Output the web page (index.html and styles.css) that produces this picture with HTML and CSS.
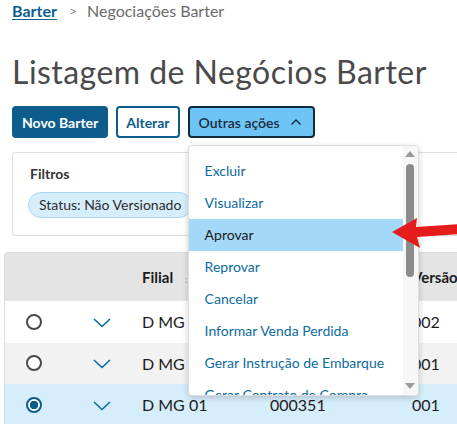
FILE: index.html
```html
<!DOCTYPE html>
<html lang="pt-BR">
<head>
    <meta charset="UTF-8">
    <meta name="viewport" content="width=device-width, initial-scale=1.0">
    <title>Listagem de Negócios Barter</title>
    <link rel="stylesheet" href="styles.css">
</head>
<body>
    <div class="page">
        <nav class="breadcrumb">
            <a class="crumb-link" href="#">Barter</a>
            <span class="crumb-sep">&gt;</span>
            <span class="crumb-current">Negociações Barter</span>
        </nav>

        <h1 class="title">Listagem de Negócios Barter</h1>

        <div class="actions">
            <button class="btn btn-primary">Novo Barter</button>
            <button class="btn btn-outline">Alterar</button>
            <div class="more">
                <button class="btn btn-more">Outras ações
                    <svg class="caret" width="12" height="8" viewBox="0 0 12 8"><path d="M1.5 6.5 L6 2 L10.5 6.5" fill="none" stroke="#1a2a36" stroke-width="1.4"/></svg>
                </button>
                <div class="menu">
                    <ul class="menu-list">
                        <li class="menu-item">Excluir</li>
                        <li class="menu-item">Visualizar</li>
                        <li class="menu-item active">Aprovar</li>
                        <li class="menu-item">Reprovar</li>
                        <li class="menu-item">Cancelar</li>
                        <li class="menu-item">Informar Venda Perdida</li>
                        <li class="menu-item">Gerar Instrução de Embarque</li>
                        <li class="menu-item">Gerar Contrato de Compra</li>
                    </ul>
                    <div class="scrollbar">
                        <span class="arrow-up"></span>
                        <span class="thumb"></span>
                        <span class="arrow-down"></span>
                    </div>
                </div>
            </div>
        </div>

        <div class="filters">
            <div class="filters-title">Filtros</div>
            <span class="chip">Status: Não Versionado</span>
        </div>
    </div>

    <div class="table">
        <div class="row head">
            <div class="cell c-radio"></div>
            <div class="cell c-expand"></div>
            <div class="cell c-filial">Filial <span class="sort">:</span></div>
            <div class="cell c-code"></div>
            <div class="cell c-ver">Versão</div>
        </div>
        <div class="row">
            <div class="cell c-radio"><span class="radio"></span></div>
            <div class="cell c-expand"><svg width="18" height="10" viewBox="0 0 18 10"><path d="M1 1 L9 8.5 L17 1" fill="none" stroke="#0c6ba0" stroke-width="1.6"/></svg></div>
            <div class="cell c-filial">D MG 01</div>
            <div class="cell c-code">000352</div>
            <div class="cell c-ver">002</div>
        </div>
        <div class="row alt">
            <div class="cell c-radio"><span class="radio"></span></div>
            <div class="cell c-expand"><svg width="18" height="10" viewBox="0 0 18 10"><path d="M1 1 L9 8.5 L17 1" fill="none" stroke="#0c6ba0" stroke-width="1.6"/></svg></div>
            <div class="cell c-filial">D MG 01</div>
            <div class="cell c-code">000350</div>
            <div class="cell c-ver">001</div>
        </div>
        <div class="row selected">
            <div class="cell c-radio"><span class="radio checked"></span></div>
            <div class="cell c-expand"><svg width="18" height="10" viewBox="0 0 18 10"><path d="M1 1 L9 8.5 L17 1" fill="none" stroke="#0c6ba0" stroke-width="1.6"/></svg></div>
            <div class="cell c-filial">D MG 01</div>
            <div class="cell c-code">000351</div>
            <div class="cell c-ver">001</div>
        </div>
    </div>

    <svg class="pointer" width="70" height="34" viewBox="0 0 70 34">
        <path d="M0 15 L25 1 L24 10 L70 7 L70 17 L25 20 L28 31 Z" fill="#e41c1c"/>
    </svg>
</body>
</html>
```

FILE: styles.css
```css
* {
    margin: 0;
    padding: 0;
    box-sizing: border-box;
}

body {
    background: #fff;
    font-family: Lato, "Noto Sans", sans-serif;
    color: #1c1c1c;
    overflow: hidden;
    position: relative;
    height: 424px;
}

.page {
    padding: 0 0 0 12px;
}

.breadcrumb {
    display: flex;
    align-items: center;
    height: 20px;
    font-size: 16px;
}

.crumb-link {
    color: #0c5f8f;
    font-weight: bold;
    text-decoration: underline;
    text-underline-offset: 2px;
}

.crumb-sep {
    color: #888;
    margin: 0 10px 0 12px;
    font-size: 14px;
}

.crumb-current {
    color: #6b6b6b;
}

.title {
    font-size: 32px;
    font-weight: normal;
    color: #4a4a4a;
    margin-top: 32px;
    line-height: 40px;
    letter-spacing: 0.45px;
}

.actions {
    display: flex;
    gap: 8px;
    margin-top: 14px;
}

.btn {
    height: 32px;
    font-family: inherit;
    font-size: 14px;
    font-weight: bold;
    border-radius: 4px;
    padding: 0 8px;
    display: flex;
    align-items: center;
    gap: 10px;
}

.btn-primary {
    background: #0c5d8c;
    color: #fff;
    border: 2px solid #0c5d8c;
}

.btn-outline {
    background: #fff;
    color: #0c5d8c;
    border: 2px solid #0c5d8c;
}

.more {
    position: relative;
}

.btn-more {
    background: #6fc4f6;
    color: #1a2a36;
    border: 2px solid #102a3c;
    font-weight: 600;
    width: 127px;
    padding: 0 9px;
}

.menu {
    position: absolute;
    top: 39px;
    left: 0;
    width: 231px;
    height: 251px;
    background: #fff;
    border: 1px solid #ddd;
    border-radius: 4px;
    box-shadow: 0 2px 6px rgba(0, 0, 0, 0.18);
    overflow: hidden;
    display: flex;
    z-index: 5;
}

.menu-list {
    list-style: none;
    flex: 1;
    padding-top: 9px;
}

.menu-item {
    height: 32px;
    line-height: 32px;
    padding-left: 16px;
    font-size: 14px;
    color: #0c6ba0;
    white-space: nowrap;
}

.menu-item.active {
    background: #a4d8f8;
    color: #1a1a1a;
}

.scrollbar {
    width: 15px;
    background: #f7f7f7;
    display: flex;
    flex-direction: column;
    align-items: center;
    padding-top: 5px;
}

.arrow-up {
    width: 0;
    height: 0;
    border-left: 5px solid transparent;
    border-right: 5px solid transparent;
    border-bottom: 6px solid #9a9a9a;
}

.thumb {
    width: 8px;
    height: 113px;
    background: #8c8c8c;
    border-radius: 4px;
    margin-top: 7px;
}

.arrow-down {
    width: 0;
    height: 0;
    border-left: 5px solid transparent;
    border-right: 5px solid transparent;
    border-top: 6px solid #9a9a9a;
    margin-top: auto;
    margin-bottom: 6px;
}

.filters {
    margin-top: 14px;
    border: 1px solid #dedede;
    border-right: none;
    border-radius: 4px 0 0 4px;
    height: 84px;
    padding: 12px 0 0 17px;
}

.filters-title {
    font-size: 14px;
    font-weight: bold;
    color: #333;
}

.chip {
    display: inline-block;
    margin-top: 10px;
    margin-left: -2px;
    height: 26px;
    line-height: 24px;
    padding: 0 10px;
    font-size: 14px;
    color: #2b2b2b;
    background: #d6eefc;
    border: 1px solid #a9d6f3;
    border-radius: 13px;
    white-space: nowrap;
}

.table {
    margin: 16px 0 0 4px;
    border-left: 1px solid #dcdcdc;
    border-top: 1px solid #dcdcdc;
    border-radius: 4px 0 0 0;
    overflow: hidden;
}

.row {
    display: flex;
    align-items: center;
    height: 41.5px;
    font-size: 16px;
    color: #1c1c1c;
}

.row.head {
    height: 48px;
    background: #e4e4e4;
    font-weight: bold;
    font-size: 15px;
}

.row.alt {
    background: #f2f2f2;
}

.row.selected {
    background: #d6edfb;
}

.cell {
    flex: none;
    white-space: nowrap;
}

.c-radio {
    width: 57px;
    display: flex;
    justify-content: center;
}

.c-expand {
    width: 80px;
    display: flex;
    justify-content: center;
    padding-top: 2px;
}

.c-filial {
    width: 128px;
}

.sort {
    color: #c9a58a;
    font-size: 10px;
    margin-left: 8px;
}

.c-code {
    width: 142px;
}

.radio {
    display: block;
    width: 16px;
    height: 16px;
    border: 2px solid #4a4a4a;
    border-radius: 50%;
    background: #fff;
}

.radio.checked {
    border-color: #0c5d8c;
    background: radial-gradient(circle, #0c5d8c 0 4px, #fff 4.5px);
}

.pointer {
    position: absolute;
    left: 392px;
    top: 217px;
    z-index: 10;
}
```
